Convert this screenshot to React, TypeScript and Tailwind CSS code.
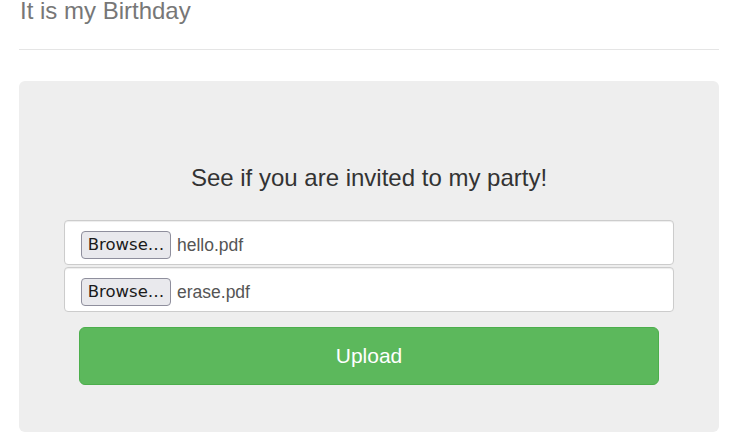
import React from "react";

function FileRow({ name }: { name: string }) {
  return (
    <div className="flex h-[45px] items-start rounded-[4px] border border-[#cccccc] bg-white pl-[16px] pt-[10px] shadow-[inset_0_1px_1px_rgba(0,0,0,0.075)]">
      <span
        className="flex h-[28px] w-[90px] items-center justify-center rounded-[4px] border border-[#8f8f9d] bg-[#e9e9ed] text-[16.5px] text-[#1b1b1b]"
        style={{ fontFamily: '"DejaVu Sans", sans-serif' }}
      >
        Browse…
      </span>
      <span className="ml-[6px] mt-[3px] text-[17.5px] leading-[22px] text-[#555555]">{name}</span>
    </div>
  );
}

export default function App() {
  return (
    <div
      className="min-h-[448px] w-[756px] bg-white pl-[19px]"
      style={{ fontFamily: '"Liberation Sans", Arial, sans-serif' }}
    >
      <div className="w-[700px]">
        <h1 className="pl-[1px] text-[24px] font-normal leading-[22px] text-[#777777]">It is my Birthday</h1>
        <div className="mt-[27px] h-px bg-[#e5e5e5]" />
        <div className="mt-[31px] flex h-[351px] flex-col rounded-[6px] bg-[#eeeeee] px-[45px] pt-[85px]">
          <h2 className="text-center text-[24px] font-normal leading-[24px] text-[#333333]">
            See if you are invited to my party!
          </h2>
          <div className="mt-[30px] flex flex-col gap-[2px]">
            <FileRow name="hello.pdf" />
            <FileRow name="erase.pdf" />
          </div>
          <button className="mx-[15px] mt-[15px] h-[58px] rounded-[6px] border border-[#4cae4c] bg-[#5cb85c] text-[21px] text-white">
            Upload
          </button>
        </div>
      </div>
    </div>
  );
}
